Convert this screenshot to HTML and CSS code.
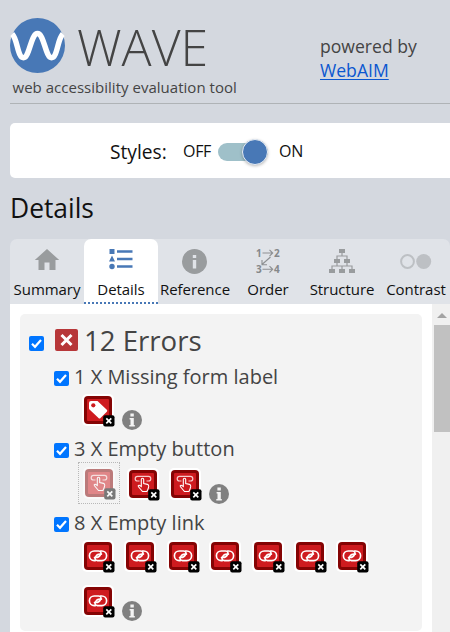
FILE: index.html
```html
<!DOCTYPE html>
<html lang="en">
<head>
<meta charset="utf-8">
<title>WAVE</title>
<link rel="stylesheet" href="styles.css">
</head>
<body>
<svg class="defs" width="0" height="0" aria-hidden="true">
  <symbol id="frame" viewBox="0 0 33 33">
    <rect width="32" height="32" rx="5" fill="#fff"/>
    <rect x="2" y="2" width="28" height="28" rx="4" fill="#850404"/>
    <rect x="5" y="5" width="22" height="22" rx="1" fill="#ce1b1f"/>
  </symbol>
  <symbol id="badge" viewBox="0 0 33 33">
    <rect x="21.2" y="21.2" width="11.3" height="11.3" rx="2" fill="#000"/>
    <path d="M24.3 24.3l5 5m0-5l-5 5" stroke="#fff" stroke-width="1.7"/>
  </symbol>
  <symbol id="tag" viewBox="0 0 33 33">
    <use href="#frame"/>
    <path d="M7 9q0-2 2-2h6.5l9.3 8.8q1 1 0 2l-6.300 6.300q-1 1-2 0L7.500 15.500q-.5-.5-.5-1.500z" fill="#fff"/>
    <circle cx="11.300" cy="11.300" r="2.100" fill="#ce1b1f"/>
    <use href="#badge"/>
  </symbol>
  <symbol id="button" viewBox="0 0 33 33">
    <use href="#frame"/>
    <path d="M12.500 13h-2a2.300 2.300 0 0 1 0-4.600h11a2.300 2.300 0 0 1 0 4.600h-2" fill="none" stroke="#f6cccc" stroke-width="1.200"/>
    <path d="M14.300 18.500v-7q0-1.300 1.200-1.300t1.200 1.300v4l3.800.9q1.400.4 1.200 2l-.6 2.600-1.200 2.500h-4.400l-4-4.700q-.8-1.700.8-1.500z" fill="#ce1b1f" stroke="#fff" stroke-width="1.100"/>
    <use href="#badge"/>
  </symbol>
  <symbol id="link" viewBox="0 0 33 33">
    <use href="#frame"/>
    <g fill="none" stroke="#fff" stroke-width="1.650" stroke-linecap="round">
      <path d="M13.500 20.600H12.200a4.800 4.800 0 0 1 0-9.600h4.300q3.600.6 2 3.600-1.400 2.900-4.500 2.900h-1.500"/>
      <path d="M18.500 11h1.300a4.800 4.800 0 0 1 0 9.600h-4.300q-3.600-.6-2-3.600 1.400-2.900 4.500-2.900h1.500"/>
    </g>
    <use href="#badge"/>
  </symbol>
  <symbol id="info" viewBox="0 0 20 20">
    <circle cx="10" cy="10" r="10" fill="#808080"/>
    <path d="M8.400 3.500h3.400v3H8.400zM7.600 8h4.200v7h1v1.500H7.300V15h1.200V9.500h-.9z" fill="#f3f3f3"/>
  </symbol>
</svg>

<header class="header">
  <div class="brand">
    <div class="wordmark">
      <svg class="logo" viewBox="0 0 55 55">
        <circle cx="27.500" cy="27.500" r="27.500" fill="#4878b6"/>
        <path d="M2.200 16C7.500 21 7.500 39.700 13.500 39.700S21 15.500 27.500 15.500s8 24.200 14 24.200S47.500 21 52.800 16" fill="none" stroke="#fff" stroke-width="5.500"/>
      </svg>
      <span class="name">WAVE</span>
    </div>
    <div class="tagline">web accessibility evaluation tool</div>
  </div>
  <div class="powered">powered by<br><a href="#">WebAIM</a></div>
</header>

<section class="styles-bar">
  <span class="styles-label">Styles:</span>
  <span class="off">OFF</span>
  <span class="switch"><span class="knob"></span></span>
  <span class="on">ON</span>
</section>

<h1 class="heading">Details</h1>

<nav class="tabs">
  <div class="tab">
    <svg viewBox="0 0 26 26"><path d="M13 1L.800 12H4.500v10h6v-7.500h5V22h6V12h3.700z" fill="#999c9e"/></svg>
    <span>Summary</span>
  </div>
  <div class="tab active">
    <svg viewBox="0 0 26 26" fill="#4878b6"><path d="M1.500 1h5v5h-5zM4 7.500L7 13.500H1z"/><circle cx="4" cy="18.500" r="2.700"/><path d="M9 2.200h15.500v2.600H9zM9 9.700h15.500v2.600H9zM9 17.200h15.500v2.600H9z"/></svg>
    <span>Details</span>
  </div>
  <div class="tab">
    <svg viewBox="0 0 26 26"><circle cx="12.500" cy="13.500" r="12.500" fill="#999c9e"/><path d="M10.800 7h3.400v3h-3.400zM10.800 12h3.400v8.500h-3.400z" fill="#e0e3e8"/></svg>
    <span>Reference</span>
  </div>
  <div class="tab shift">
    <svg viewBox="0 0 26 26"><g class="order"><text x="1" y="9">1</text><text x="19" y="9">2</text><text x="1" y="25">3</text><text x="19" y="25">4</text></g><path d="M7.500 5h10M14.500 1.800L17.700 5l-3.200 3.200M7.500 21.300h10M14.500 18.100l3.200 3.200-3.200 3.200M15.500 9L7 16.500M7 12v4.700h5" fill="none" stroke="#8d9092" stroke-width="1.100"/></svg>
    <span>Order</span>
  </div>
  <div class="tab shift">
    <svg viewBox="0 0 26 26"><path d="M10 1h6v4h-6zM5 11h6v4H5zM15 11h6v4h-6zM0 21h6v4H0zM10 21h6v4h-6zM20 21h6v4h-6z" fill="#999c9e"/><path d="M13 4v4M8 12V8h10v4M8 14v4M18 14v4M3 22v-4h20v4M13 18v4" fill="none" stroke="#999c9e" stroke-width="1.200"/></svg>
    <span>Structure</span>
  </div>
  <div class="tab">
    <svg class="wide" viewBox="0 0 32 26"><circle cx="7.500" cy="13.500" r="6.400" fill="none" stroke="#bdc0c4" stroke-width="2"/><circle cx="23.700" cy="13.500" r="7.500" fill="#bdc0c4"/></svg>
    <span>Contrast</span>
  </div>
</nav>

<main class="panel">
  <div class="card">
    <div class="group-title">
      <span class="check"><svg viewBox="0 0 15 15"><path d="M3 7.800l3 3 6-6.800"/></svg></span>
      <svg class="error" viewBox="0 0 23 22"><rect width="23" height="22" rx="2" fill="#b73739"/><path d="M6.500 6l10 10m0-10l-10 10" stroke="#fff" stroke-width="3"/></svg>
      <h2>12 Errors</h2>
    </div>
    <div class="item-title">
      <span class="check"><svg viewBox="0 0 15 15"><path d="M3 7.800l3 3 6-6.800"/></svg></span>
      <h3>1 X Missing form label</h3>
    </div>
    <div class="icons one">
      <svg class="icon"><use href="#tag"/></svg><svg class="info"><use href="#info"/></svg>
    </div>
    <div class="item-title">
      <span class="check"><svg viewBox="0 0 15 15"><path d="M3 7.800l3 3 6-6.800"/></svg></span>
      <h3>3 X Empty button</h3>
    </div>
    <div class="icons buttons">
      <span class="selected"><svg class="icon"><use href="#button"/></svg></span><svg class="icon"><use href="#button"/></svg><svg class="icon"><use href="#button"/></svg><svg class="info"><use href="#info"/></svg>
    </div>
    <div class="item-title">
      <span class="check"><svg viewBox="0 0 15 15"><path d="M3 7.800l3 3 6-6.800"/></svg></span>
      <h3>8 X Empty link</h3>
    </div>
    <div class="icons links">
      <svg class="icon"><use href="#link"/></svg><svg class="icon"><use href="#link"/></svg><svg class="icon"><use href="#link"/></svg><svg class="icon"><use href="#link"/></svg><svg class="icon"><use href="#link"/></svg><svg class="icon"><use href="#link"/></svg><svg class="icon"><use href="#link"/></svg><svg class="icon"><use href="#link"/></svg><svg class="info"><use href="#info"/></svg>
    </div>
  </div>
  <div class="scrollbar">
    <svg class="arrow" viewBox="0 0 10 5"><path d="M0 5L5 0l5 5z" fill="#a3a3a3"/></svg>
    <div class="thumb"></div>
  </div>
</main>
</body>
</html>
```
FILE: styles.css
```css
* { box-sizing: border-box; }
body {
  margin: 0;
  width: 450px;
  height: 632px;
  overflow: hidden;
  background: #d4d8df;
  color: #111;
  font-family: "Open Sans", "Noto Sans", sans-serif;
}
svg { display: block; flex: none; }
.defs { position: absolute; }
h1, h2, h3 { margin: 0; font-weight: 400; white-space: nowrap; }

.header {
  display: flex;
  height: 104px;
  margin-left: 10px;
  padding-top: 18px;
  border-bottom: 1px solid #afb3b6;
  color: #444;
}
.brand { width: 310px; }
.wordmark { display: flex; height: 55px; }
.logo { width: 55px; height: 55px; }
.name { margin-left: 12px; font-size: 50px; line-height: 58px; font-weight: 300; }
.tagline { padding: 3px 0 0 2.500px; font-size: 15px; line-height: 22px; letter-spacing: .02px; white-space: nowrap; }
.powered { padding-top: 16px; font-size: 17.600px; line-height: 24px; white-space: nowrap; }
.powered a { color: #0b57d0; text-underline-offset: 2px; text-decoration-thickness: 1px; }

.styles-bar {
  display: flex;
  align-items: center;
  height: 55px;
  margin: 19px 0 0 10px;
  padding-left: 100px;
  background: #fff;
  border-radius: 5px 0 0 5px;
  font-size: 16px;
}
.styles-label { width: 73px; padding-top: 2px; font-size: 19.200px; }
.off { width: 35px; }
.off, .on { letter-spacing: -.3px; }
.switch { display: flex; align-items: center; width: 50px; height: 18px; margin-top: 3px; background: #9fc0c9; border-radius: 9px; }
.knob { width: 26px; height: 26px; margin-left: 24px; border: 1px solid #e8eef5; border-radius: 50%; background: #4878b6; box-shadow: 0 1px 3px #0004; }
.on { margin-left: 11px; }

.heading { height: 61px; padding: 10px 0 0 10px; font-size: 26.400px; line-height: 40px; }

.tabs { display: flex; width: 440px; height: 65px; margin-left: 10px; background: #e0e3e8; border-radius: 7px 7px 0 0; overflow: hidden; }
.tab { display: flex; flex-direction: column; align-items: center; flex: 0 0 74px; padding-top: 9px; font-size: 15px; line-height: 22px; }
.tab svg { width: 26px; height: 26px; overflow: visible; }
.tab .wide { width: 32px; }
.tab span { margin-top: 4px; white-space: nowrap; letter-spacing: -.05px; }
.shift { padding-right: 2px; }
.tab:last-child { flex-basis: 72px; }
.active { background: #fff; border-bottom: 2px dotted #4878b6; border-radius: 7px 7px 0 0; }
.order text { font-size: 10px; font-weight: 700; fill: #85888a; }

.panel { display: flex; height: 328px; margin-left: 10px; background: #fff; }
.card { width: 402px; height: 317px; margin: 10px 10px 0; padding-top: 7px; background: #f3f3f3; border-radius: 5px; color: #444; }
.group-title { display: flex; height: 40px; padding-left: 9px; }
.group-title .check { margin-top: 15px; }
.error { width: 23px; height: 22px; margin: 8px 6px 0 11px; }
h2 { font-size: 27.600px; line-height: 38px; }
.item-title { display: flex; height: 32px; padding-left: 34px; }
.item-title .check { margin-top: 10px; }
h3 { margin-left: 5px; font-size: 20px; line-height: 32px; }
.check { width: 15px; height: 15px; flex: none; border-radius: 2px; background: #0075ff; }
.check path { fill: none; stroke: #fff; stroke-width: 2.200; }
.icons { display: flex; padding-left: 62px; }
.icon { width: 33px; height: 33px; margin-right: 9.400px; }
.info { width: 20px; height: 20px; }
.one { height: 40px; padding-top: 1px; }
.one .info { margin: 16px 0 0 -2.400px; }
.buttons { height: 42px; padding-left: 58px; }
.buttons > .icon { margin-top: 3px; }
.buttons .info { margin: 19px 0 0 -3px; }
.selected { width: 42px; height: 42px; margin: -3px 7px 0 0; padding: 4px 0 0 4px; border: 1px dotted #b8b8b8; }
.selected .icon { opacity: .5; }
.links { flex-wrap: wrap; align-content: flex-start; height: 91px; padding: 1px 30px 0 62px; row-gap: 9px; }
.links .info { margin: 16px 0 0 -2.400px; }
.links .icon:nth-of-type(n+8) { margin-top: 3px; }
.links .info:last-child { margin-top: 19px; }

.scrollbar { display: flex; flex-direction: column; align-items: center; width: 18px; background: #f0f0f0; }
.arrow { width: 10px; height: 5px; margin: 9px 0 7px 2px; }
.thumb { width: 16px; height: 107px; margin-left: 2px; background: #c1c1c1; }
```
